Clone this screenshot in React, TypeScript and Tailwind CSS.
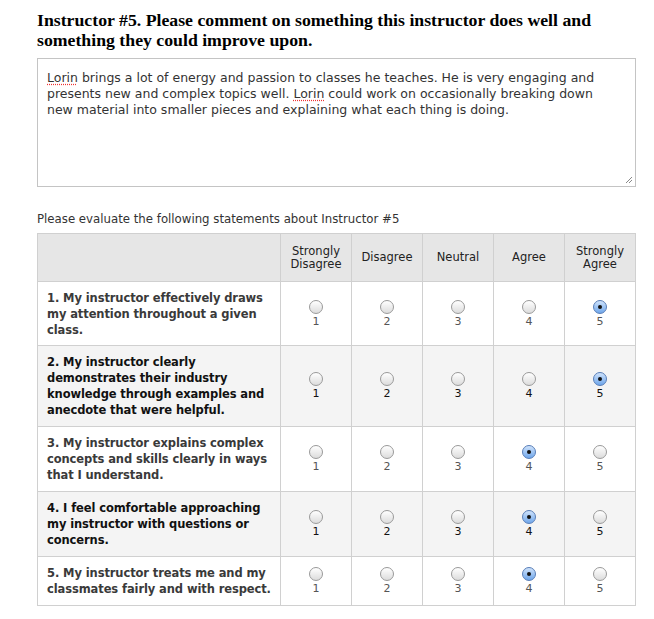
const statements = [
  { text: "1. My instructor effectively draws my attention throughout a given class.", value: 5, h: "h-[64px]" },
  { text: "2. My instructor clearly demonstrates their industry knowledge through examples and anecdote that were helpful.", value: 5, h: "h-[81px]" },
  { text: "3. My instructor explains complex concepts and skills clearly in ways that I understand.", value: 4, h: "h-[65px]" },
  { text: "4. I feel comfortable approaching my instructor with questions or concerns.", value: 4, h: "h-[65px]" },
  { text: "5. My instructor treats me and my classmates fairly and with respect.", value: 4, h: "h-[49px]" },
];

const headers = [["Strongly", "Disagree"], ["Disagree"], ["Neutral"], ["Agree"], ["Strongly", "Agree"]];

function Radio({ checked }: { checked: boolean }) {
  if (checked) {
    return (
      <span className="flex h-[14px] w-[14px] items-center justify-center rounded-full border border-[#5a7fb8] bg-gradient-to-b from-[#cfe3fb] to-[#6fa6ea]">
        <span className="h-[4px] w-[4px] rounded-full bg-[#111]" />
      </span>
    );
  }
  return (
    <span className="block h-[14px] w-[14px] rounded-full border border-[#9a9a9a] bg-gradient-to-b from-[#ffffff] to-[#dcdcdc]" />
  );
}

export default function App() {
  return (
    <div className="min-h-[619px] w-[654px] bg-white pl-[37px] pt-[10px] font-['DejaVu_Sans',sans-serif] text-[#333]">
      <h1 className="w-[580px] font-['Liberation_Serif',serif] text-[17.75px] font-bold leading-[20px] text-black">
        Instructor #5. Please comment on something this instructor does well and something they could improve upon.
      </h1>

      <div className="relative mt-[8px] h-[129px] w-[599px] border border-[#c4c4c4] pl-[9px] pr-[14px] pt-[11px] text-[12.5px] leading-[16px] text-[#333]">
        <p>
          <span className="underline decoration-[#e33] decoration-dotted underline-offset-2">Lorin</span> brings a lot of energy and passion to classes he teaches. He is very engaging and presents new and complex topics well.{" "}
          <span className="underline decoration-[#e33] decoration-dotted underline-offset-2">Lorin</span> could work on occasionally breaking down new material into smaller pieces and explaining what each thing is doing.
        </p>
        <svg className="absolute bottom-[2px] right-[2px]" width="8" height="8" viewBox="0 0 8 8">
          <path d="M7 1 L1 7 M7 4 L4 7" stroke="#888" strokeWidth="1" />
        </svg>
      </div>

      <p className="mt-[24px] text-[11.75px] leading-[16px] text-[#333]">Please evaluate the following statements about Instructor #5</p>

      <table className="mt-[6px] w-[599px] border-collapse text-[11.5px]">
        <thead>
          <tr className="h-[48px] bg-[#e6e6e6]">
            <th className="w-[243px] border border-[#d0d0d0]" />
            {headers.map((h, i) => (
              <th key={i} className="w-[71px] border border-[#d0d0d0] text-center font-normal leading-[13px] text-[#222]">
                {h.map((l) => (
                  <div key={l}>{l}</div>
                ))}
              </th>
            ))}
          </tr>
        </thead>
        <tbody>
          {statements.map((s, r) => (
            <tr key={r} className={`${s.h} ${r % 2 === 1 ? "bg-[#f4f4f4]" : "bg-white"}`}>
              <td className={`border border-[#d0d0d0] pl-[9px] pr-[7px] text-[11.5px] font-bold leading-[16px] tracking-[-0.1px] ${r % 2 === 1 ? "text-[#111]" : "text-[#3a3a3a]"}`}>
                {s.text}
              </td>
              {[1, 2, 3, 4, 5].map((n) => (
                <td key={n} className="border border-[#d0d0d0] text-center align-middle">
                  <div className="flex flex-col items-center">
                    <Radio checked={s.value === n} />
                    <span className={`mt-[2px] text-[11px] leading-[12px] ${r % 2 === 1 ? "text-[#111]" : "text-[#555]"}`}>{n}</span>
                  </div>
                </td>
              ))}
            </tr>
          ))}
        </tbody>
      </table>
    </div>
  );
}
